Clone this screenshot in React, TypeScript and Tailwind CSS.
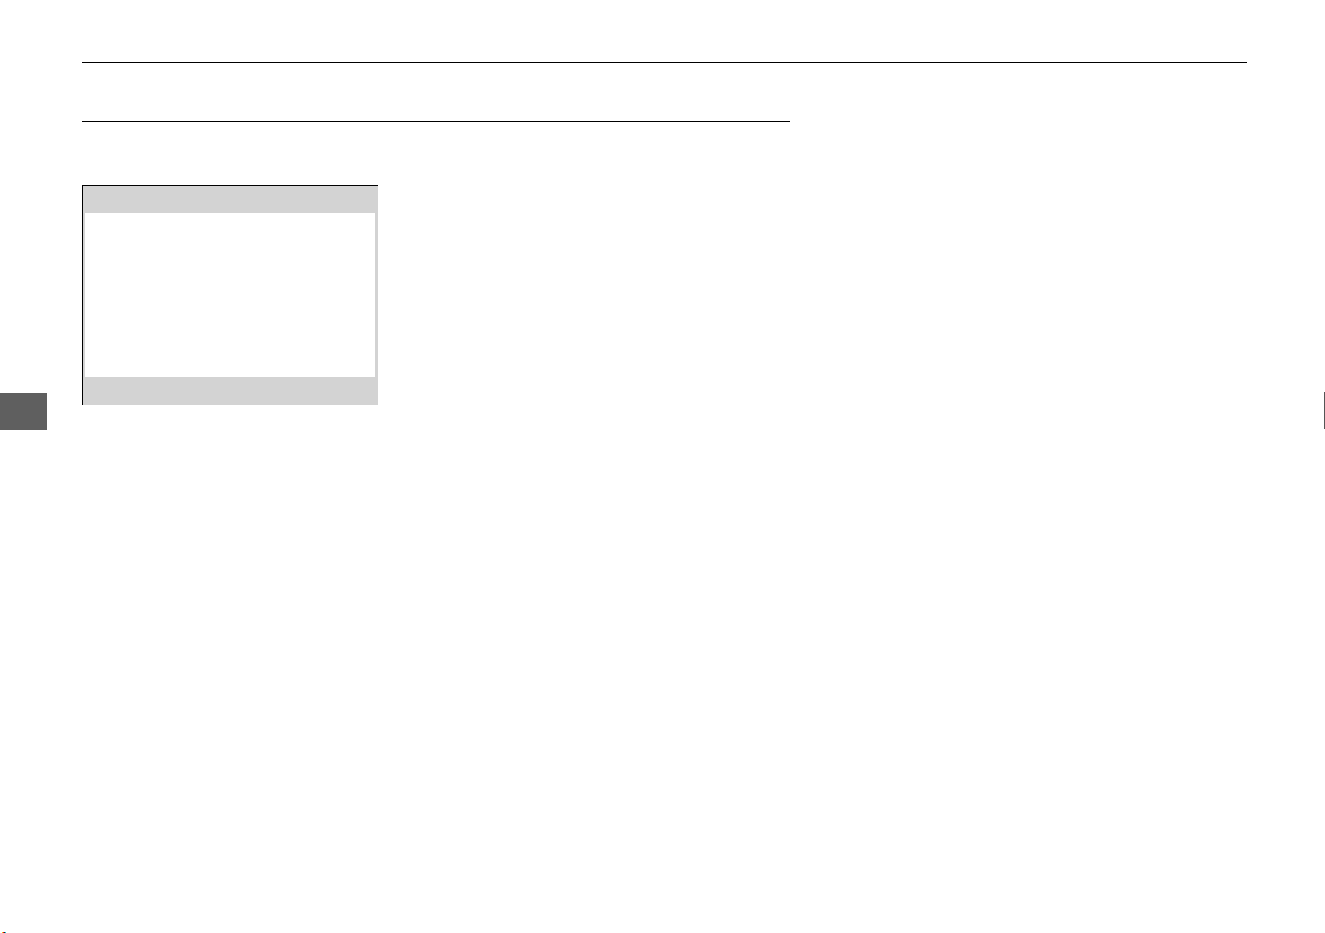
export default function App() {
  return (
    <div className="relative h-[933px] w-[1325px] overflow-hidden bg-white">
      <div className="flex flex-col pl-[82px] pt-[62px]">
        <div className="h-px w-[1165px] bg-black" />
        <div className="mt-[58px] h-px w-[708px] bg-black" />

        <div className="mt-[63px] flex h-[220px] w-[296px] flex-col border-l border-t border-black bg-[#d3d3d3] pl-[2px] pr-[3px] pt-[27px]">
          <div className="h-[164px] w-full bg-white" />
        </div>
      </div>

      {/* edge tabs */}
      <div className="absolute left-0 top-[393px] h-[37px] w-[47px] bg-[#5f5f5f]" />
      <div className="absolute right-0 top-[392px] h-[37px] w-px bg-[#555555]" />

      {/* crop marks */}
      <div className="absolute bottom-0 left-[2px] flex h-px">
        <div className="w-px bg-[#f5d000]" />
        <div className="w-px bg-[#e0002a]" />
        <div className="w-px bg-[#222222]" />
        <div className="w-px bg-[#00c8e0]" />
      </div>
    </div>
  );
}
